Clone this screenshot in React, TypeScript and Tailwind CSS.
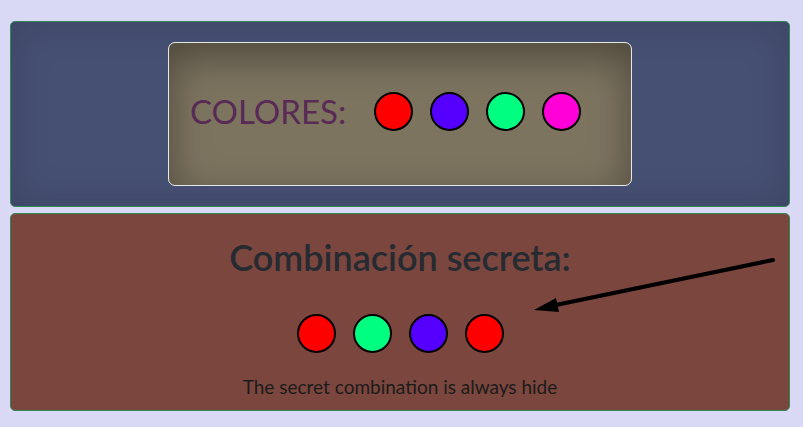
import React from "react";

function Dot({ color }: { color: string }) {
  return (
    <div
      className="w-[39px] h-[39px] rounded-full border-2 border-black shrink-0"
      style={{ backgroundColor: color }}
    />
  );
}

export default function App() {
  return (
    <div className="w-[803px] h-[427px] bg-[#d9d9f5] pt-[21px] pl-[10px] pr-[13px] flex flex-col gap-[6px] font-['Lato','Noto_Sans',sans-serif]">
      <div className="h-[186px] rounded-[5px] border border-[#2e8b57] bg-[#465073] shadow-[inset_0_0_40px_rgba(0,0,0,0.15)] flex items-center justify-center">
        <div className="w-[464px] h-[144px] rounded-[7px] border border-[#e8e8e8] bg-[#7d7460] shadow-[inset_0_14px_40px_rgba(0,0,0,0.38)] flex items-center pl-[21px] pb-[6px]">
          <span className="text-[#582a55] text-[33px] leading-none mr-[28px]">COLORES:</span>
          <div className="flex gap-[17px]">
            <Dot color="#ff0000" />
            <Dot color="#5500ff" />
            <Dot color="#00ff80" />
            <Dot color="#ff00d8" />
          </div>
        </div>
      </div>
      <div className="relative h-[198px] rounded-[5px] border border-[#2e8b57] bg-[#7b463e] flex flex-col items-center">
        <h1 className="mt-[21px] text-[36px] font-semibold leading-[44px] text-[#262a31]">Combinación secreta:</h1>
        <div className="mt-[35px] flex gap-[17px]">
          <Dot color="#ff0000" />
          <Dot color="#00ff80" />
          <Dot color="#5500ff" />
          <Dot color="#ff0000" />
        </div>
        <p className="mt-[22px] text-[19px] leading-[24px] text-[#1b1b1b]">The secret combination is always hide</p>
        <svg className="absolute left-[510px] top-[41px]" width="270" height="60" viewBox="0 0 270 60">
          <line x1="252" y1="5" x2="30" y2="51" stroke="black" strokeWidth="4" strokeLinecap="round" />
          <polygon points="13,55 35,43 38,57" fill="black" />
        </svg>
      </div>
    </div>
  );
}
